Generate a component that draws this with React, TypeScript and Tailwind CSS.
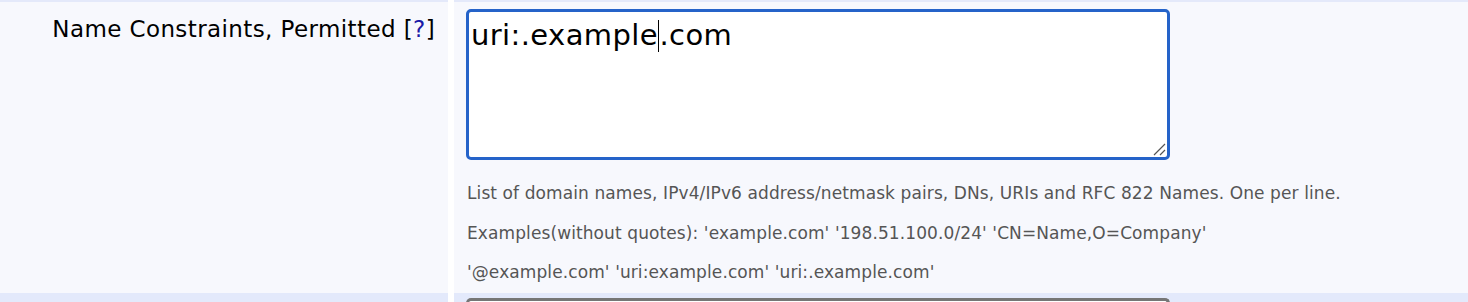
const App = () => {
  return (
    <div className="w-full h-[302px] bg-white overflow-hidden font-['DejaVu_Sans',sans-serif]">
      <div className="flex gap-[6px] h-[2px]">
        <div className="w-[448px] bg-[#e4e9fa]" />
        <div className="flex-1 bg-[#e4e9fa]" />
      </div>
      <div className="flex gap-[6px] h-[291px]">
        <div className="w-[448px] bg-[#f7f8fd] pr-[13px] pt-[12px] text-right text-[23px] tracking-[0.4px] text-black leading-[30px] whitespace-nowrap">
          Name Constraints, Permitted [<span className="text-[#1a1aa6]">?</span>]
        </div>
        <div className="flex-1 bg-[#f7f8fd] pl-[12px] pt-[7px]">
          <div className="relative w-[704px] h-[151px] bg-white border-[3px] border-[#2563c9] rounded-[5px] px-[2px] pt-[5px] text-[29px] tracking-[0.4px] leading-[36px] text-black">
            uri:.example<span className="inline-block w-[1.5px] h-[32px] bg-black align-[-7px]" />.com
            <svg className="absolute right-[1px] bottom-[1px]" width="14" height="14" viewBox="0 0 14 14">
              <path d="M13 2 L2 13 M13 8 L8 13" stroke="#555" strokeWidth="1.2" fill="none" />
            </svg>
          </div>
          <div className="text-[17px] tracking-[0.1px] text-[#555555] leading-[20px] pl-[1px]">
            <p className="mt-[23px]">List of domain names, IPv4/IPv6 address/netmask pairs, DNs, URIs and RFC 822 Names. One per line.</p>
            <p className="mt-[20px]">Examples(without quotes): 'example.com' '198.51.100.0/24' 'CN=Name,O=Company'</p>
            <p className="mt-[19px]">'@example.com' 'uri:example.com' 'uri:.example.com'</p>
          </div>
        </div>
      </div>
      <div className="flex gap-[6px] h-[9px]">
        <div className="w-[448px] bg-[#e3e9fb]" />
        <div className="flex-1 bg-[#e3e9fb] pl-[12px] pt-[5px]">
          <div className="w-[704px] h-[10px] border-t-[3px] border-x-[3px] border-[#767676] rounded-t-[5px] bg-white" />
        </div>
      </div>
    </div>
  )
}

export default App
